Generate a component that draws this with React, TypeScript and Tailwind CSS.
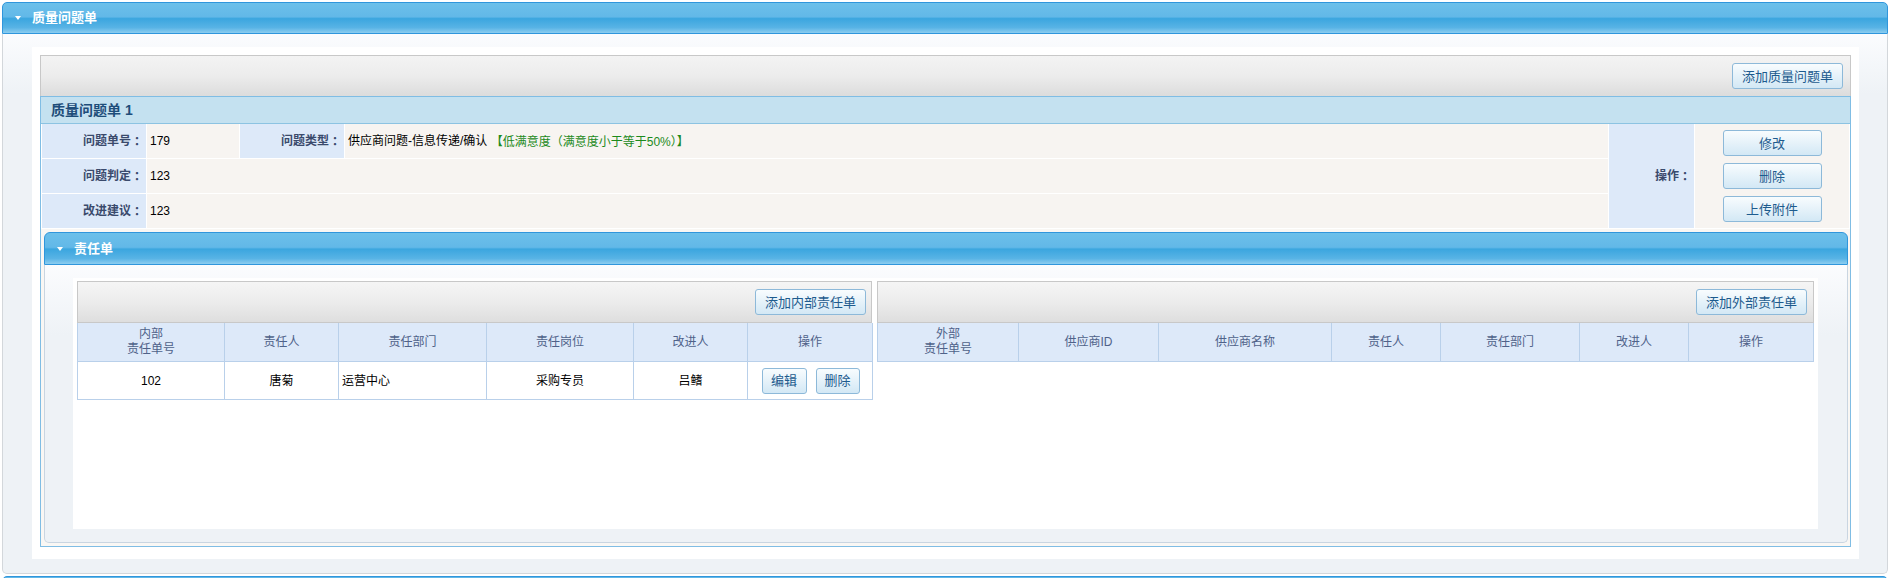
import React from "react";

function Tri() {
  return (
    <span className="inline-block w-0 h-0 border-l-[3px] border-r-[3px] border-t-[4px] border-l-transparent border-r-transparent border-t-white" />
  );
}

function Colon() {
  return <span className="font-['Noto_Sans_CJK_TC',sans-serif]">：</span>;
}

function P({ c }: { c: string }) {
  return <span className="font-['Noto_Sans_CJK_TC',sans-serif]">{c}</span>;
}

function Btn({ children, className = "" }: { children: React.ReactNode; className?: string }) {
  return (
    <div
      className={
        "h-[26px] flex items-center justify-center rounded-[3px] border border-[#8db9d9] bg-[linear-gradient(to_bottom,#f8fcfe,#d3e8f5)] text-[13px] text-[#1d5b8e] leading-none whitespace-nowrap " +
        className
      }
    >
      {children}
    </div>
  );
}

function Toolbar({ label, mr }: { label: string; mr: string }) {
  return (
    <div className="h-[42px] border border-[#c8c8c8] bg-[linear-gradient(to_bottom,#f5f5f5,#ececec_50%,#dedede)] flex items-center justify-end">
      <Btn className={"px-[9px] " + mr}>{label}</Btn>
    </div>
  );
}

const leftHead = ["内部\n责任单号", "责任人", "责任部门", "责任岗位", "改进人", "操作"];
const rightHead = ["外部\n责任单号", "供应商ID", "供应商名称", "责任人", "责任部门", "改进人", "操作"];

function HeadCell({ text }: { text: string }) {
  return (
    <div className="h-[39px] border-r border-b border-[#b9d0ea] bg-[#dde9f9] flex items-center justify-center text-center text-[#4f6289] leading-[15px] whitespace-pre">
      {text}
    </div>
  );
}

function Label({ text, span = "" }: { text: string; span?: string }) {
  return (
    <div className={"bg-[#dde9f9] flex items-center justify-end pr-[3px] font-bold text-[#3a4a6c] " + span}>
      {text}
      <Colon />
    </div>
  );
}

export default function App() {
  return (
    <div className="w-[1888px] h-[578px] overflow-hidden bg-white pt-[2px] pl-[2px] font-['Liberation_Sans','Noto_Sans_CJK_SC',sans-serif] text-[12px] text-black">
      {/* Outer panel header */}
      <div className="h-[32px] rounded-t-[5px] border border-[#3096dc] bg-[linear-gradient(to_bottom,#6cc0ea_0%,#62b8e8_46%,#3ba6df_52%,#58b3e5_82%,#8ccdf0_100%)] flex items-center">
        <span className="ml-[12px] flex items-center">
          <Tri />
        </span>
        <span className="ml-[11px] text-white font-bold text-[13px]">质量问题单</span>
      </div>
      {/* Outer panel body */}
      <div className="h-[540px] border-x border-b border-[#d3d7db] rounded-b-[5px] bg-[linear-gradient(to_bottom,#fbfcfe,#eef2f6_60px)] pl-[29px] pt-[13px] pr-[28px] pb-[14px]">
        <div className="h-full bg-white px-[8px] pt-[8px] pb-[12px] flex flex-col">
          {/* toolbar */}
          <div className="h-[41px] border-t border-x border-[#c8c8c8] bg-[linear-gradient(to_bottom,#f3f3f3,#ececec_50%,#dcdcdc)] flex items-center justify-end">
            <Btn className="px-[9px] mr-[7px]">添加质量问题单</Btn>
          </div>
          {/* blue box */}
          <div className="flex-1 border border-[#80bde4] bg-[#f9f7f4] flex flex-col">
            <div className="h-[27px] shrink-0 border-b border-[#8cc3e2] bg-[#c4e1f0] flex items-center pl-[10px] text-[14px] font-bold text-[#1e4d7a]">
              质量问题单 1
            </div>
            <div className="grid grid-cols-[104px_92px_104px_1fr_85px_154px] grid-rows-[34px_34px_34px] gap-px px-px pb-px bg-white shrink-0">
              <Label text="问题单号" />
              <div className="bg-[#f7f4f1] flex items-center pl-[3px]">179</div>
              <Label text="问题类型" />
              <div className="bg-[#f7f4f1] flex items-center pl-[3px] whitespace-pre">
                供应商问题-信息传递/确认 <span className="text-[#1c8a1c]">【低满意度<P c="（" />满意度小于等于50%<P c="）" />】</span>
              </div>
              <Label text="操作" span="row-span-3" />
              <div className="row-span-3 bg-[#f7f4f1] flex flex-col items-center justify-center gap-[7px]">
                <Btn className="w-[99px]">修改</Btn>
                <Btn className="w-[99px]">删除</Btn>
                <Btn className="w-[99px]">上传附件</Btn>
              </div>
              <Label text="问题判定" />
              <div className="col-span-3 bg-[#f7f4f1] flex items-center pl-[3px]">123</div>
              <Label text="改进建议" />
              <div className="col-span-3 bg-[#f7f4f1] flex items-center pl-[3px]">123</div>
            </div>
            {/* 责任单 panel */}
            <div className="mt-[3px] ml-[3px] mr-[2px] h-[311px] flex flex-col">
              <div className="h-[33px] shrink-0 rounded-t-[6px] border border-[#3096dc] bg-[linear-gradient(to_bottom,#6cc0ea_0%,#62b8e8_46%,#3ba6df_52%,#58b3e5_82%,#8ccdf0_100%)] flex items-center">
                <span className="ml-[12px] flex items-center">
                  <Tri />
                </span>
                <span className="ml-[11px] text-white font-bold text-[13px]">责任单</span>
              </div>
              <div className="flex-1 border-x border-b border-[#c9d5e1] rounded-b-[5px] bg-[linear-gradient(to_bottom,#fbfcfe,#eef2f6_70px)] pl-[28px] pr-[29px] pt-[13px] pb-[13px]">
                <div className="h-full bg-white pl-[4px] pr-[4px] pt-[3px] flex gap-[5px] items-start">
                  {/* left table */}
                  <div className="w-[795px] shrink-0">
                    <Toolbar label="添加内部责任单" mr="mr-[5px]" />
                    <div className="grid grid-cols-[147px_114px_148px_147px_114px_125px] border-l border-[#b9d0ea]">
                      {leftHead.map((h) => (
                        <HeadCell key={h} text={h} />
                      ))}
                      <div className="h-[38px] border-r border-b border-[#b9d0ea] flex items-center justify-center">102</div>
                      <div className="h-[38px] border-r border-b border-[#b9d0ea] flex items-center justify-center">唐菊</div>
                      <div className="h-[38px] border-r border-b border-[#b9d0ea] flex items-center pl-[3px]">运营中心</div>
                      <div className="h-[38px] border-r border-b border-[#b9d0ea] flex items-center justify-center">采购专员</div>
                      <div className="h-[38px] border-r border-b border-[#b9d0ea] flex items-center justify-center">吕鳍</div>
                      <div className="h-[38px] border-r border-b border-[#b9d0ea] flex items-center justify-center gap-[9px] pl-px">
                        <Btn className="w-[45px]">编辑</Btn>
                        <Btn className="w-[44px]">删除</Btn>
                      </div>
                    </div>
                  </div>
                  {/* right table */}
                  <div className="flex-1">
                    <Toolbar label="添加外部责任单" mr="mr-[6px]" />
                    <div className="grid grid-cols-[141px_140px_173px_109px_139px_109px_1fr] border-l border-[#b9d0ea]">
                      {rightHead.map((h) => (
                        <HeadCell key={h} text={h} />
                      ))}
                    </div>
                  </div>
                </div>
              </div>
            </div>
          </div>
        </div>
      </div>
      {/* next panel top edge */}
      <div className="mt-[2px] h-[10px] rounded-t-[5px] border border-[#3096dc] bg-[#62b8e8]" />
    </div>
  );
}
